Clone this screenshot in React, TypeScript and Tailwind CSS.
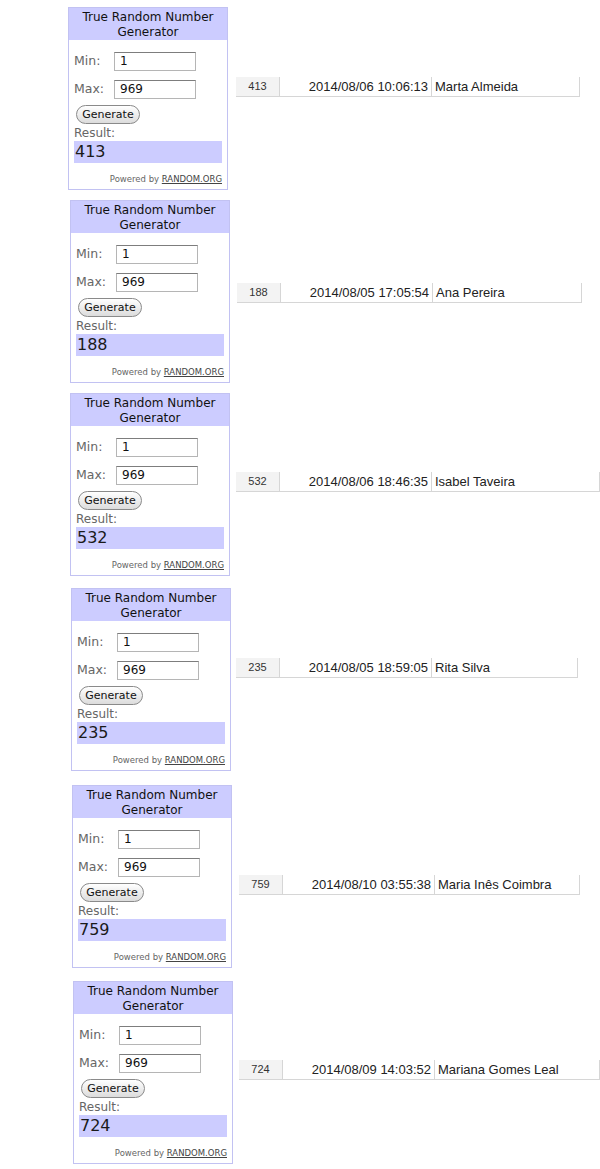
import React from 'react';

interface Entry {
  result: string;
  date: string;
  name: string;
  box: string;
  row: string;
}

const entries: Entry[] = [
  { result: '413', date: '2014/08/06 10:06:13', name: 'Marta Almeida', box: 'ml-[68px] mt-[7px]', row: 'ml-[8px] mt-[70px] w-[344px]' },
  { result: '188', date: '2014/08/05 17:05:54', name: 'Ana Pereira', box: 'ml-[70px] mt-[10px]', row: 'ml-[7px] mt-[83px] w-[345px]' },
  { result: '532', date: '2014/08/06 18:46:35', name: 'Isabel Taveira', box: 'ml-[70px] mt-[10px]', row: 'ml-[6px] mt-[79px] w-[364px]' },
  { result: '235', date: '2014/08/05 18:59:05', name: 'Rita Silva', box: 'ml-[71px] mt-[12px]', row: 'ml-[5px] mt-[70px] w-[342px]' },
  { result: '759', date: '2014/08/10 03:55:38', name: 'Maria Inês Coimbra', box: 'ml-[72px] mt-[14px]', row: 'ml-[7px] mt-[90px] w-[341px]' },
  { result: '724', date: '2014/08/09 14:03:52', name: 'Mariana Gomes Leal', box: 'ml-[73px] mt-[13px]', row: 'ml-[6px] mt-[79px] w-[361px]' },
];

function Field({ label, value }: { label: string; value: string }) {
  return (
    <div className="flex items-center h-[19px]">
      <span className="w-[40px] text-[12.5px] text-[#666]">{label}</span>
      <div className="w-[82px] h-[19px] border border-[#b5b5b5] border-t-[#7d7d7d] bg-white pl-[5px] text-[12px] leading-[17px] text-[#111]">
        {value}
      </div>
    </div>
  );
}

function Generator({ result }: { result: string }) {
  return (
    <div className="w-[160px] h-[183px] border border-[#c2c2f2] bg-white flex flex-col font-['DejaVu_Sans',sans-serif]">
      <div className="h-[32px] bg-[#ccccff] text-center text-[12px] leading-[15px] text-[#111] pt-[2px]">
        True Random Number
        <br />
        Generator
      </div>
      <div className="flex flex-col px-[5px] pt-[12px]">
        <Field label="Min:" value="1" />
        <div className="h-[9px]" />
        <Field label="Max:" value="969" />
        <button className="mt-[6px] ml-[2px] w-[64px] h-[19px] rounded-full border border-[#8a8a8a] bg-gradient-to-b from-white to-[#dcdcdc] text-[11px] leading-[17px] text-[#111]">
          Generate
        </button>
        <div className="h-[17px] text-[12px] leading-[19px] text-[#666]">Result:</div>
        <div className="w-[148px] h-[22px] bg-[#ccccff] pl-[1px] text-[16px] leading-[22px] text-[#1a1a1a]">
          {result}
        </div>
        <div className="mt-[10px] text-right text-[8.5px] leading-[12px] text-[#666]">
          Powered by <span className="underline text-[#444]">RANDOM.ORG</span>
        </div>
      </div>
    </div>
  );
}

function SheetRow({ entry }: { entry: Entry }) {
  return (
    <div className={`${entry.row} h-[20px] flex border-b border-[#d6d6d6] font-['Liberation_Sans',Arial,sans-serif] text-[#222]`}>
      <div className="w-[44px] bg-[#f3f3f3] border-r border-[#d6d6d6] text-center text-[11px] leading-[19px] text-[#333]">
        {entry.result}
      </div>
      <div className="w-[152px] border-r border-[#d6d6d6] text-right pr-[3px] text-[13px] leading-[19px]">
        {entry.date}
      </div>
      <div className="flex-1 pl-[3px] text-[13px] leading-[19px] border-r border-[#d6d6d6]">{entry.name}</div>
    </div>
  );
}

export default function App() {
  return (
    <div className="w-[600px] h-[1169px] bg-white overflow-hidden">
      {entries.map((e) => (
        <div key={e.result} className={`${e.box} flex items-start`}>
          <Generator result={e.result} />
          <SheetRow entry={e} />
        </div>
      ))}
    </div>
  );
}
